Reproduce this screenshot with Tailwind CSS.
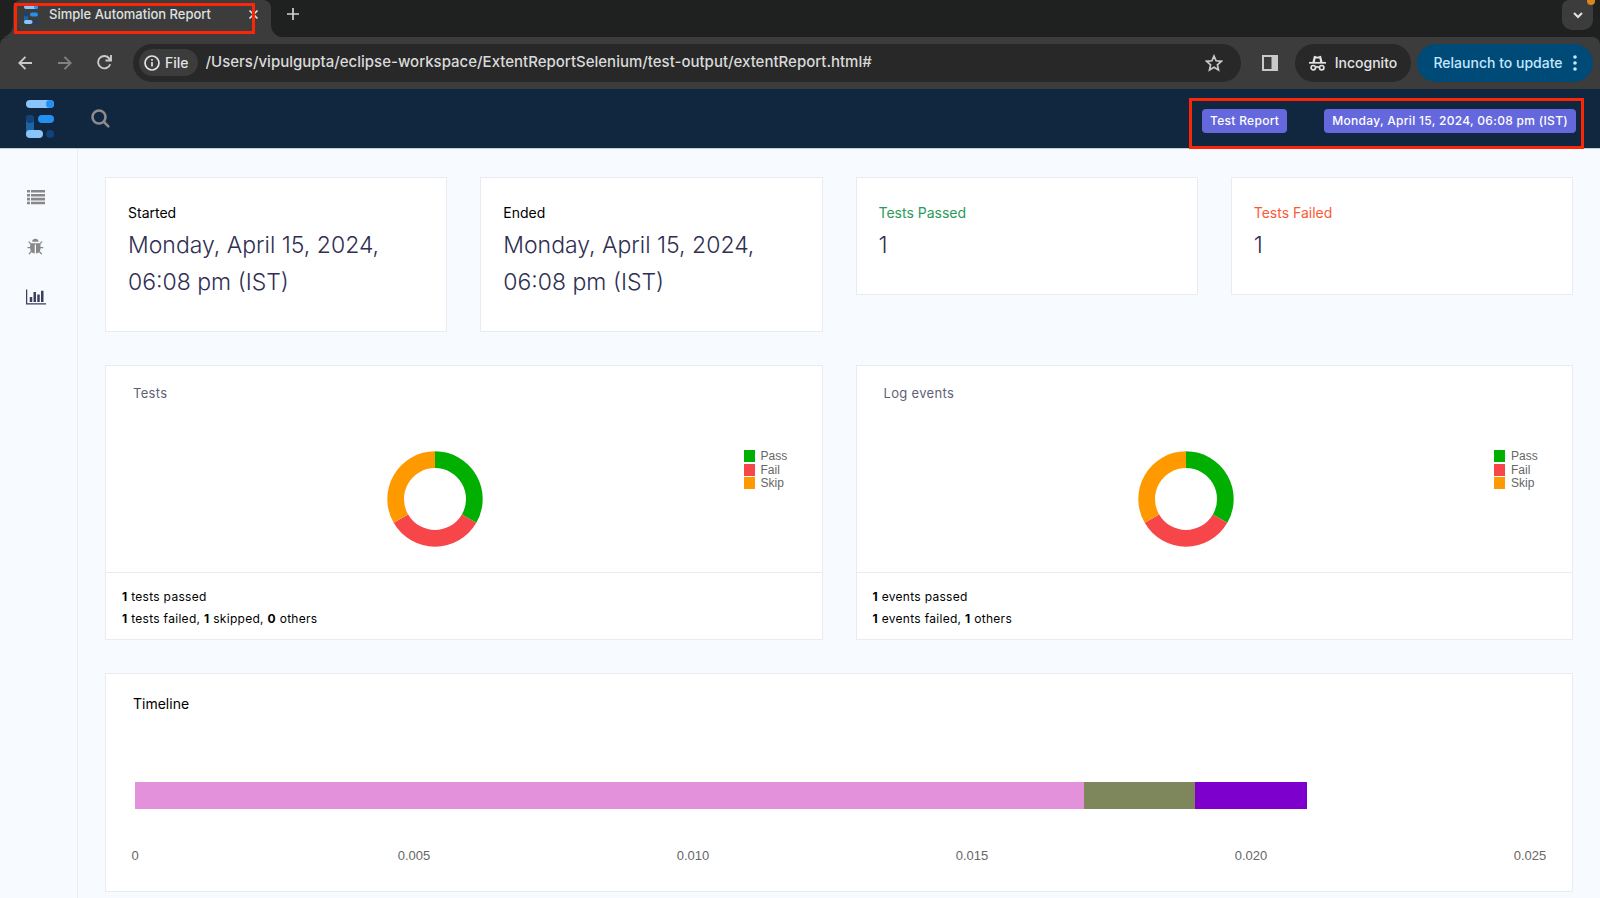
<!DOCTYPE html>
<html lang="en">
<head>
<meta charset="utf-8">
<title>Simple Automation Report</title>
<script src="https://cdn.jsdelivr.net/npm/@tailwindcss/browser@4"></script>
</head>
<body class="min-h-screen flex flex-col bg-[#f7faff] font-['Inter','Liberation_Sans',sans-serif] text-black overflow-x-hidden">

<svg class="hidden" aria-hidden="true">
  <symbol id="logo" viewBox="0 0 28 38">
    <rect x="0" y="0" width="28" height="8" rx="4" fill="#8ac4fb"/>
    <circle cx="24" cy="4" r="4" fill="#2490f0"/>
    <rect x="0" y="15" width="8" height="22" rx="4" fill="#1b64a5"/>
    <circle cx="4" cy="19" r="4" fill="#0f4379"/>
    <rect x="12" y="15" width="16" height="8" rx="4" fill="#2490f0"/>
    <rect x="0" y="30" width="17" height="8" rx="4" fill="#8ac4fb"/>
    <circle cx="24" cy="34" r="4" fill="#0f4379"/>
  </symbol>
  <symbol id="donut" viewBox="-48 -48 96 96">
    <path d="M0-47.700A47.700 47.700 0 0 1 41.310 23.850L26.850 15.500A31 31 0 0 0 0-31Z" fill="#00af00"/>
    <path d="M41.310 23.850A47.700 47.700 0 0 1-41.310 23.850L-26.850 15.500A31 31 0 0 0 26.850 15.500Z" fill="#f7464a"/>
    <path d="M-41.310 23.850A47.700 47.700 0 0 1 0-47.700V-31A31 31 0 0 0-26.850 15.500Z" fill="#ff9900"/>
  </symbol>
</svg>

<!-- Tab strip -->
<div class="h-[37px] shrink-0 bg-[#1f2120] flex items-start text-[#dfe1e0]">
  <div class="relative ml-[13px] w-[258px] h-full rounded-t-lg bg-[#3c3c3c] flex items-start pl-[11px] pr-3">
    <svg class="absolute right-full bottom-0 size-3" viewBox="0 0 12 12"><path d="M12 0V12H0A12 12 0 0 0 12 0Z" fill="#3c3c3c"/></svg>
    <svg class="absolute left-full bottom-0 size-3" viewBox="0 0 12 12"><path d="M0 0V12H12A12 12 0 0 1 0 0Z" fill="#3c3c3c"/></svg>
    <svg class="mt-[5px] w-[14px] h-[19px]"><use href="#logo"/></svg>
    <span class="ml-[11px] mt-1 text-[13px] font-medium leading-5 whitespace-nowrap">Simple Automation Report</span>
    <button class="ml-auto mt-[9px]" aria-label="Close tab"><svg class="size-[11px]" viewBox="0 0 11 11" fill="none" stroke="#dfe1e0" stroke-width="1.700"><path d="M1.500 1.500l8 8M9.500 1.500l-8 8"/></svg></button>
    <div class="absolute left-px top-[3px] w-[241px] h-[31px] border-[3px] border-[#fb2608] pointer-events-none"></div>
  </div>
  <button class="ml-4 mt-2" aria-label="New tab"><svg class="size-3" viewBox="0 0 12 12" stroke="#d0d2d1" stroke-width="1.700"><path d="M6 0v12M0 6h12"/></svg></button>
  <button class="relative ml-auto mr-[7px] w-[31px] h-[30px] rounded-b-[10px] rounded-t-[7px] bg-[#3c3c3c] flex items-center justify-center" aria-label="Search tabs">
    <svg class="w-[10px] h-[7px]" viewBox="0 0 10 7" fill="none" stroke="#e3e3e3" stroke-width="2"><path d="M1 1l4 4 4-4"/></svg>
    <span class="absolute -top-[3px] -right-[2px] size-2 rounded-full bg-[#d5871f]"></span>
  </button>
</div>

<!-- Toolbar -->
<div class="bg-[#1f2120] shrink-0">
<div class="h-[52px] rounded-t-lg bg-[#3c3c3c] flex items-center pl-[18px] pr-[7px] pb-px text-[#e3e3e3] text-[15px]">
  <button aria-label="Back"><svg class="size-[14px]" viewBox="0 0 14 14" fill="none" stroke="#c9c9c9" stroke-width="1.900"><path d="M14 7H1.500M7.500 .8L1.300 7l6.200 6.200"/></svg></button>
  <button class="ml-[26px]" aria-label="Forward"><svg class="size-[14px]" viewBox="0 0 14 14" fill="none" stroke="#818181" stroke-width="1.900"><path d="M0 7h12.500M6.500 .8L12.700 7l-6.200 6.200"/></svg></button>
  <button class="ml-[25px]" aria-label="Reload"><svg class="size-[15px]" viewBox="0 0 15 15" fill="none" stroke="#c9c9c9" stroke-width="1.900"><path d="M13.200 9.200A6.200 6.200 0 1 1 12.400 3.600L13.500 5M14 0v5.500H8.500"/></svg></button>
  <div class="ml-[21px] flex-1 h-[38px] rounded-full bg-[#282828] flex items-center pl-[6px] pr-[18px]">
    <button class="h-[27px] rounded-full bg-[#3c3c3c] flex items-center gap-[5px] pl-[5px] pr-[9px] text-sm font-medium">
      <svg class="size-4" viewBox="0 0 16 16" fill="none" stroke="#e3e3e3" stroke-width="1.700"><circle cx="8" cy="8" r="7"/><path d="M8 7v4.500M8 4v1.700"/></svg>File
    </button>
    <input class="ml-2 flex-1 min-w-0 bg-transparent font-medium text-[#dadada] outline-none" aria-label="Address" value="/Users/vipulgupta/eclipse-workspace/ExtentReportSelenium/test-output/extentReport.html#">
    <button aria-label="Bookmark"><svg class="size-[18px]" viewBox="0 0 18 18" fill="none" stroke="#c9c9c9" stroke-width="1.700"><path d="M9 2l2.100 4.800 5.200.5-3.900 3.500 1.100 5.100L9 13.200l-4.500 2.700 1.100-5.100L1.700 7.300l5.200-.5z"/></svg></button>
  </div>
  <button class="ml-[21px]" aria-label="Side panel"><svg class="size-4" viewBox="0 0 16 16"><rect x="1" y="1" width="14" height="14" fill="none" stroke="#c9c9c9" stroke-width="2"/><path d="M9.500 1H15v14H9.500z" fill="#c9c9c9"/></svg></button>
  <button class="ml-[17px] h-[38px] w-[116px] rounded-full bg-[#282828] flex items-center justify-center gap-[9px] text-sm font-medium">
    <svg class="w-[17px] h-4" viewBox="0 0 17 16" fill="none" stroke="#e3e3e3" stroke-width="1.700"><path d="M0 7.800h17"/><path d="M3.300 7.500L5 .8l3.500 1L12 .8l1.700 6.700h-2.500L10.500 3.500h-4L5.800 7.500z" fill="#e3e3e3" stroke="none"/><circle cx="4.300" cy="12.700" r="2.200"/><circle cx="12.700" cy="12.700" r="2.200"/><path d="M6.500 12.300q2-1 4 0"/></svg>Incognito
  </button>
  <button class="ml-[6px] h-[38px] w-[176px] rounded-full bg-[#004a77] text-[#c2e7ff] flex items-center justify-center gap-[10px] text-sm font-medium whitespace-nowrap">Relaunch to update
    <svg class="w-1 h-4" viewBox="0 0 4 16" fill="#c2e7ff"><circle cx="2" cy="2" r="1.800"/><circle cx="2" cy="8" r="1.800"/><circle cx="2" cy="14" r="1.800"/></svg>
  </button>
</div>
</div>

<!-- Report header -->
<header class="relative h-[60px] shrink-0 bg-[#11263f] border-b border-[#c4ccd8] flex items-center pl-[26px] pr-6">
  <a href="#" aria-label="Extent report"><svg class="w-7 h-[38px]"><use href="#logo"/></svg></a>
  <button class="ml-[37px]" aria-label="Search"><svg class="size-[19px]" viewBox="0 0 19 19" fill="none" stroke="#8d8a8c" stroke-width="2.600" stroke-linecap="round"><circle cx="8" cy="8" r="6.500"/><path d="M13 13l4.300 4.300"/></svg></button>
  <div class="ml-auto flex gap-[37px] pt-1 text-xs font-medium text-white whitespace-nowrap tracking-wide">
    <span class="h-6 rounded bg-[#6568dc] px-2 leading-6">Test Report</span>
    <span class="h-6 rounded bg-[#6568dc] px-2 leading-6">Monday, April 15, 2024, 06:08 pm (IST)</span>
  </div>
  <div class="absolute right-4 top-[9px] w-[395px] h-[51px] border-[3px] border-[#fb2608] pointer-events-none"></div>
</header>

<div class="flex-1 flex">
  <nav class="w-[78px] shrink-0 border-r border-[#eaedf2] flex flex-col items-start gap-[30px] pt-[38px] pl-[26px] text-[#888888]">
    <a href="#" class="size-5" aria-label="Tests"><svg class="w-5 h-5" viewBox="0 0 20 20" fill="currentColor"><path d="M1 3h3v2.600H1zM5 3h14v2.600H5zM1 6.900h3v2.600H1zM5 6.900h14v2.600H5zM1 10.800h3v2.600H1zM5 10.800h14v2.600H5zM1 14.700h3v2.600H1zM5 14.700h14v2.600H5z"/></svg></a>
    <a href="#" class="size-5 flex items-center justify-center" aria-label="Exceptions"><svg class="size-[18px]" viewBox="0 0 1792 1792" fill="currentColor"><path d="M1632 960q0 26-19 45t-45 19h-224q0 171-67 290l208 209q19 19 19 45t-19 45q-18 19-45 19t-45-19l-198-197q-5 5-15 13t-42 28.500-65 36.500-82 29-97 13v-896h-128v896q-51 0-101.500-13.500t-87-33-66-39-43.500-32.500l-15-14-183 207q-20 21-48 21-24 0-43-16-19-18-20.500-44.500t15.500-46.500l202-227q-58-114-58-274h-224q-26 0-45-19t-19-45 19-45 45-19h224v-294l-173-173q-19-19-19-45t19-45 45-19 45 19l173 173h844l173-173q19-19 45-19t45 19 19 45-19 45l-173 173v294h224q26 0 45 19t19 45zm-480-576h-640q0-133 93.500-226.500t226.500-93.500 226.500 93.500 93.500 226.500z"/></svg></a>
    <a href="#" class="size-5 flex items-center text-[#3d3d5c]" aria-label="Dashboard"><svg class="w-5 h-[18px]" viewBox="0 0 2048 1792" fill="currentColor"><path d="M640 896v512h-256v-512h256zm384-512v1024h-256v-1024h256zm1024 1152v128h-2048v-1536h128v1408h1920zm-640-896v768h-256v-768h256zm384-384v1152h-256v-1152h256z"/></svg></a>
  </nav>

  <main class="flex-1 min-w-0 px-[27px] pt-7 pb-[6px] flex flex-col gap-[33px]">
    <section class="grid grid-cols-4 gap-[33px] items-start">
      <div class="bg-white border border-[#e8ebef] px-[22px] pt-[23px] pb-[30px]">
        <p class="text-sm leading-6">Started</p>
        <h3 class="mt-[2px] text-[23px] leading-[37px] font-light text-[#2f2f52]">Monday, April 15, 2024, 06:08 pm (IST)</h3>
      </div>
      <div class="bg-white border border-[#e8ebef] px-[22px] pt-[23px] pb-[30px]">
        <p class="text-sm leading-6">Ended</p>
        <h3 class="mt-[2px] text-[23px] leading-[37px] font-light text-[#2f2f52]">Monday, April 15, 2024, 06:08 pm (IST)</h3>
      </div>
      <div class="bg-white border border-[#e8ebef] px-[22px] pt-[23px] pb-[30px]">
        <p class="text-sm leading-6 text-[#2a9a58]">Tests Passed</p>
        <h3 class="mt-[2px] text-[23px] leading-[37px] font-light text-[#2f2f52]">1</h3>
      </div>
      <div class="bg-white border border-[#e8ebef] px-[22px] pt-[23px] pb-[30px]">
        <p class="text-sm leading-6 text-[#fb5a35]">Tests Failed</p>
        <h3 class="mt-[2px] text-[23px] leading-[37px] font-light text-[#2f2f52]">1</h3>
      </div>
    </section>

    <section class="grid grid-cols-2 gap-[33px]">
      <div class="bg-white border border-[#e8ebef]">
        <h6 class="pl-[27px] pt-[17px] text-[13px] leading-5 text-[#5f5f78] tracking-wide">Tests</h6>
        <div class="mt-[47px] mb-[25px] pl-[27px] pr-[33px] flex items-start">
          <div class="flex-1 flex justify-center pt-px"><svg class="size-24"><use href="#donut"/></svg></div>
          <ul class="w-[51px] pl-[6px] font-['Liberation_Sans',sans-serif] text-xs leading-[13px] text-[#666666]">
            <li class="flex gap-[6px]"><span class="size-[11px] h-3 shrink-0 bg-[#00af00]"></span>Pass</li>
            <li class="flex gap-[6px] mt-px"><span class="size-[11px] h-3 shrink-0 bg-[#f7464a]"></span>Fail</li>
            <li class="flex gap-[6px]"><span class="size-[11px] h-3 shrink-0 bg-[#ff9900]"></span>Skip</li>
          </ul>
        </div>
        <div class="border-t border-[#e8ebef] px-4 pt-[13px] pb-[9px] text-xs leading-[22px] tracking-wide">
          <p><b>1</b> tests passed</p>
          <p><b>1</b> tests failed, <b>1</b> skipped, <b>0</b> others</p>
        </div>
      </div>
      <div class="bg-white border border-[#e8ebef]">
        <h6 class="pl-[27px] pt-[17px] text-[13px] leading-5 text-[#5f5f78] tracking-wide">Log events</h6>
        <div class="mt-[47px] mb-[25px] pl-[27px] pr-[33px] flex items-start">
          <div class="flex-1 flex justify-center pt-px"><svg class="size-24"><use href="#donut"/></svg></div>
          <ul class="w-[51px] pl-[6px] font-['Liberation_Sans',sans-serif] text-xs leading-[13px] text-[#666666]">
            <li class="flex gap-[6px]"><span class="size-[11px] h-3 shrink-0 bg-[#00af00]"></span>Pass</li>
            <li class="flex gap-[6px] mt-px"><span class="size-[11px] h-3 shrink-0 bg-[#f7464a]"></span>Fail</li>
            <li class="flex gap-[6px]"><span class="size-[11px] h-3 shrink-0 bg-[#ff9900]"></span>Skip</li>
          </ul>
        </div>
        <div class="border-t border-[#e8ebef] px-4 pt-[13px] pb-[9px] text-xs leading-[22px] tracking-wide">
          <p><b>1</b> events passed</p>
          <p><b>1</b> events failed, <b>1</b> others</p>
        </div>
      </div>
    </section>

    <section class="bg-white border border-[#e8ebef] pl-[29px] pr-[42px] pt-5 pb-[26px]">
      <h6 class="-ml-[2px] text-sm leading-5">Timeline</h6>
      <div class="mt-[68px] h-[27px] flex">
        <div class="bg-[#e491dc]" style="width:68%"></div>
        <div class="bg-[#7e875b]" style="width:8%"></div>
        <div class="bg-[#7d00cc]" style="width:8%"></div>
      </div>
      <div class="mt-[38px] flex justify-between font-['Liberation_Sans',sans-serif] text-[13px] leading-[18px] text-[#666666]">
        <span class="w-0 flex justify-center">0</span>
        <span class="w-0 flex justify-center">0.005</span>
        <span class="w-0 flex justify-center">0.010</span>
        <span class="w-0 flex justify-center">0.015</span>
        <span class="w-0 flex justify-center">0.020</span>
        <span class="w-0 flex justify-center">0.025</span>
      </div>
    </section>
  </main>
</div>
</body>
</html>
